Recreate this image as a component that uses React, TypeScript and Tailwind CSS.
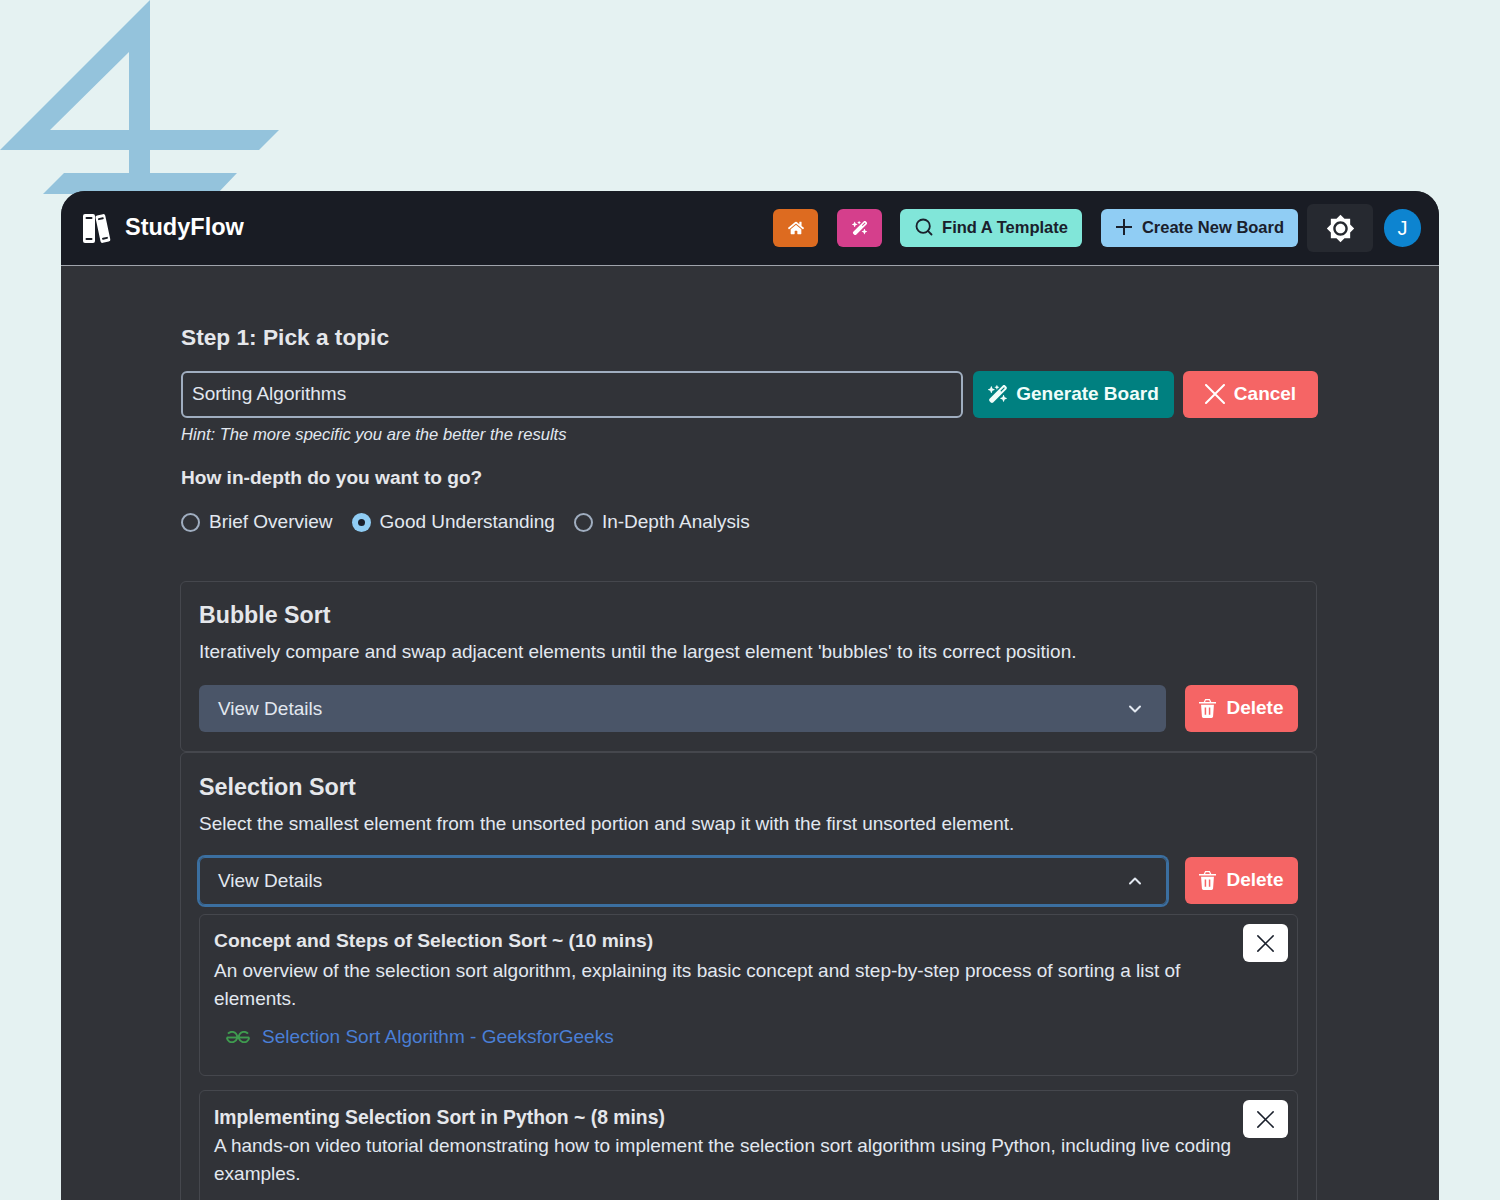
import { FaHome } from 'react-icons/fa';
import { FaWandMagicSparkles } from 'react-icons/fa6';
import { MdBrightness7 } from 'react-icons/md';
import { ChevronDown, ChevronUp, Search } from 'lucide-react';

const font = { fontFamily: '"Liberation Sans", Arial, sans-serif' };

function BooksIcon() {
  return (
    <svg width="30" height="31" viewBox="0 0 30 31" fill="white">
      <rect x="1" y="1" width="12" height="29" rx="2" />
      <rect x="3.5" y="4" width="7" height="2" rx="1" fill="#191c24" />
      <rect x="3.5" y="25" width="7" height="2" rx="1" fill="#191c24" />
      <g transform="rotate(-12 21 16)">
        <rect x="16" y="1.5" width="10" height="28" rx="2" />
        <rect x="18" y="4.5" width="6" height="2" rx="1" fill="#191c24" />
        <rect x="18" y="24.5" width="6" height="2" rx="1" fill="#191c24" />
      </g>
    </svg>
  );
}

function GfgIcon() {
  return (
    <svg width="26" height="12" viewBox="0 0 26 12" fill="none" stroke="#3f9b4f" strokeWidth="1.900">
      <path d="M1.800 6.500h22.400" />
      <path d="M3 2.700A5.200 5.200 0 1 1 1.800 6.500" />
      <path d="M23 2.700A5.200 5.200 0 1 0 24.200 6.500" />
    </svg>
  );
}

function TrashIcon() {
  return (
    <svg width="17" height="19" viewBox="0 0 18 20" fill="white">
      <path fillRule="evenodd" d="M6.500 0h5l1.500 3h4.500a.8.8 0 0 1 0 1.800H.5A.8.800 0 0 1 .5 3H5ZM7.200 1.300 6.500 3h5l-.7-1.700Z" />
      <path fillRule="evenodd" d="M2.200 6h13.600l-.9 12.500A1.600 1.600 0 0 1 13.300 20H4.700a1.600 1.600 0 0 1-1.600-1.500ZM6 9v7.500h1.600V9Zm4.400 0v7.500H12V9Z" />
    </svg>
  );
}

function XIcon({ size, width }: { size: number; width: number }) {
  return (
    <svg width={size} height={size} viewBox="0 0 20 20" fill="none" stroke="currentColor" strokeWidth={width} strokeLinecap="round">
      <path d="M1 1l18 18M19 1L1 19" />
    </svg>
  );
}

function DeleteButton() {
  return (
    <button className="flex h-[47px] w-[113px] shrink-0 items-center justify-center gap-[10px] rounded-md bg-[#f56565] text-[19px] font-bold text-white">
      <TrashIcon />
      Delete
    </button>
  );
}

function CloseButton() {
  return (
    <button className="flex h-[38px] w-[45px] shrink-0 items-center justify-center rounded-md bg-white text-[#1a202c]">
      <XIcon size={17} width={1.800} />
    </button>
  );
}

export default function App() {
  return (
    <div className="relative h-[1200px] overflow-hidden bg-[#e5f2f2] px-[61px] pt-[191px]" style={font}>
      <svg className="absolute left-0 top-0" width="280" height="195" viewBox="0 0 280 195" fill="#94c3dc">
        <path fillRule="evenodd" d="M150 0V130H279L259 150H150V173H237L217 194H43L64 173H129V150H0ZM129 52L50 130H129Z" />
      </svg>

      <div className="relative h-[1100px] overflow-hidden rounded-t-[24px] bg-[#313338]">
        <header className="flex h-[75px] items-center justify-between border-b border-[#a0a4ac] bg-[#191c24] pl-[21px] pr-[18px]">
          <div className="flex items-center gap-[13px] text-[23.500px] font-bold text-white">
            <BooksIcon />
            StudyFlow
          </div>
          <div className="flex items-center">
            <button className="flex h-[38px] w-[45px] items-center justify-center rounded-md bg-[#dd6b20] text-white">
              <FaHome size={16} />
            </button>
            <button className="ml-[19px] flex h-[38px] w-[45px] items-center justify-center rounded-md bg-[#d53f8c] text-white">
              <FaWandMagicSparkles size={16} />
            </button>
            <button className="ml-[18px] flex h-[38px] w-[182px] items-center justify-center gap-[8px] rounded-md bg-[#81e6d9] pb-[2px] text-[16.500px] font-bold text-[#1a202c]">
              <Search size={20} strokeWidth={2.200} />
              Find A Template
            </button>
            <button className="ml-[19px] flex h-[38px] w-[197px] items-center justify-center gap-[9px] rounded-md bg-[#90cdf4] pb-[2px] text-[16.500px] font-bold text-[#1a202c]">
              <svg width="18" height="18" viewBox="0 0 18 18" stroke="currentColor" strokeWidth="2">
                <path d="M9 1v16M1 9h16" />
              </svg>
              Create New Board
            </button>
            <button className="ml-[9px] flex h-12 w-[66px] items-center justify-center rounded-md bg-[#262930] text-white">
              <MdBrightness7 size={29} />
            </button>
            <div className="ml-[11px] flex h-[38px] w-[37px] items-center justify-center rounded-full bg-[#0d84d0] text-xl text-white">
              J
            </div>
          </div>
        </header>

        <main className="pl-[120px] pr-[121px] pt-[55px]">
          <h2 className="text-[22.700px] font-bold leading-8 text-[#e5e7eb]">Step 1: Pick a topic</h2>

          <div className="mt-[18px] flex">
            <div className="flex h-[47px] flex-1 items-center rounded-md border-2 border-[#a0aec0] px-[9px] text-[19px] text-[#e2e8f0]">
              Sorting Algorithms
            </div>
            <button className="ml-[10px] flex h-[47px] w-[201px] items-center justify-center gap-[8px] rounded-md bg-[#008080] pb-px text-[19px] font-bold text-[#f0fdfa]">
              <FaWandMagicSparkles size={20} />
              Generate Board
            </button>
            <button className="ml-[9px] flex h-[47px] w-[135px] items-center justify-center gap-[9px] rounded-md bg-[#f56565] pb-px text-[19px] font-bold text-white">
              <XIcon size={20} width={2} />
              Cancel
            </button>
          </div>

          <p className="mt-[5px] text-[16.600px] italic leading-6 text-[#e2e8f0]">Hint: The more specific you are the better the results</p>
          <p className="mt-[17px] text-[19.100px] font-bold leading-7 text-[#e5e7eb]">How in-depth do you want to go?</p>

          <div className="mt-[16px] flex items-center text-[19px] leading-7 text-[#e2e8f0]">
            <span className="h-[19px] w-[19px] rounded-full border-2 border-[#a0aec0]" />
            <span className="ml-[9px]">Brief Overview</span>
            <span className="ml-[19px] flex h-[19px] w-[19px] items-center justify-center rounded-full bg-[#90cdf4]">
              <span className="h-[7px] w-[7px] rounded-full bg-[#1a202c]" />
            </span>
            <span className="ml-[9px]">Good Understanding</span>
            <span className="ml-[19px] h-[19px] w-[19px] rounded-full border-2 border-[#a0aec0]" />
            <span className="ml-[9px]">In-Depth Analysis</span>
          </div>

          <section className="-ml-px mr-px mt-[45px] rounded-md border border-[#45474d] px-[18px] pb-[19px] pt-[17px]">
            <h3 className="text-[23.200px] font-bold leading-8 text-[#e5e7eb]">Bubble Sort</h3>
            <p className="mt-[7px] text-[19px] leading-7 text-[#e2e8f0]">
              Iteratively compare and swap adjacent elements until the largest element 'bubbles' to its correct position.
            </p>
            <div className="mt-[19px] flex gap-[19px]">
              <button className="flex h-[47px] flex-1 items-center justify-between rounded-md bg-[#4a5568] px-[21px] pt-px text-[19px] text-[#e2e8f0]">
                <span className="-ml-[2px]">View Details</span>
                <ChevronDown size={20} strokeWidth={2.400} />
              </button>
              <DeleteButton />
            </div>
          </section>

          <section className="-ml-px mr-px rounded-md border border-[#45474d] px-[18px] pt-[18px]">
            <h3 className="text-[23.300px] font-bold leading-8 text-[#e5e7eb]">Selection Sort</h3>
            <p className="mt-[7px] text-[19px] leading-7 text-[#e2e8f0]">
              Select the smallest element from the unsorted portion and swap it with the first unsorted element.
            </p>
            <div className="mt-[19px] flex gap-[19px]">
              <button className="-mr-px flex h-[48px] flex-1 items-center justify-between rounded-md border border-[#3b6fa0] pl-[20px] pr-[21px] text-[19px] text-[#e2e8f0] ring-2 ring-[#3b6fa0]">
                <span className="-ml-[2px]">View Details</span>
                <ChevronUp size={20} strokeWidth={2.400} />
              </button>
              <DeleteButton />
            </div>

            <div className="mt-[9px] flex justify-between rounded-md border border-[#45474d] pb-[24px] pl-[14px] pr-[9px] pt-[9px]">
              <div className="mt-[3px] w-[1024px]">
                <p className="mb-[2px] text-[19.250px] font-bold leading-7 text-[#e5e7eb]">Concept and Steps of Selection Sort ~ (10 mins)</p>
                <p className="text-[19px] leading-7 text-[#e2e8f0]">
                  An overview of the selection sort algorithm, explaining its basic concept and step-by-step process of sorting a list of elements.
                </p>
                <div className="mt-[10px] flex items-center gap-[11px] pl-[11px] text-[19px] leading-7 text-[#4a7fd6]">
                  <GfgIcon />
                  Selection Sort Algorithm - GeeksforGeeks
                </div>
              </div>
              <CloseButton />
            </div>

            <div className="mt-[14px] flex justify-between rounded-md border border-[#45474d] pb-[24px] pl-[14px] pr-[9px] pt-[9px]">
              <div className="mt-[3px] w-[1024px]">
                <p className="mb-[1px] text-[19.350px] font-bold leading-7 text-[#e5e7eb]">Implementing Selection Sort in Python ~ (8 mins)</p>
                <p className="text-[19px] leading-7 text-[#e2e8f0]">
                  A hands-on video tutorial demonstrating how to implement the selection sort algorithm using Python, including live coding examples.
                </p>
              </div>
              <CloseButton />
            </div>
          </section>
        </main>
      </div>
    </div>
  );
}
